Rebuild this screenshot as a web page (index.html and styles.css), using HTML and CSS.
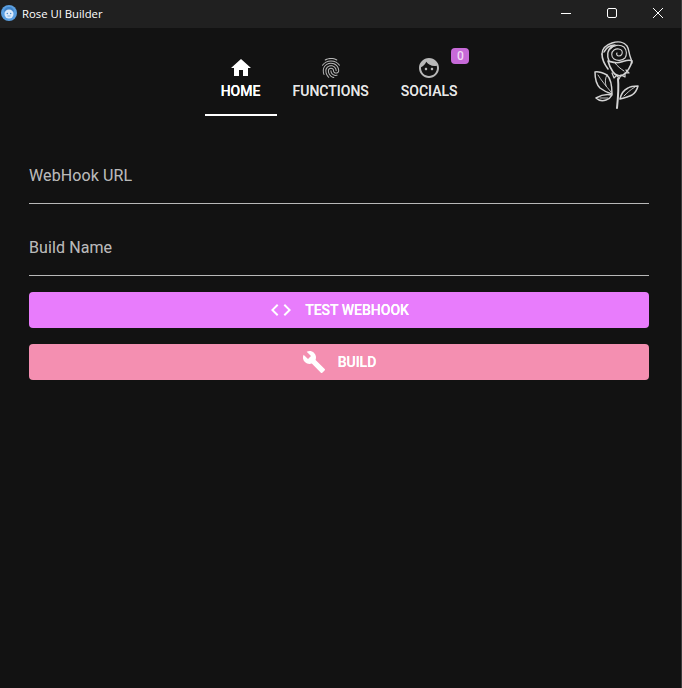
FILE: index.html
```html
<!DOCTYPE html>
<html lang="en">
<head>
<meta charset="utf-8">
<title>Rose UI Builder</title>
<link rel="stylesheet" href="styles.css">
</head>
<body>
<div class="window">
  <header class="titlebar">
    <svg class="app-icon" viewBox="0 0 16 16"><circle cx="8" cy="8" r="8" fill="#5b9fe0"/><path d="M3 7c0-3 2-5 5-5s5 2 5 5c-1-1-2-1.500-5-1.500S4 6 3 7z" fill="#3f83c8"/><circle cx="8" cy="9" r="4.500" fill="#dbeafa"/><circle cx="6.300" cy="8.500" r=".7" fill="#3f83c8"/><circle cx="9.700" cy="8.500" r=".7" fill="#3f83c8"/><path d="M6.500 11h3" stroke="#3f83c8" stroke-width=".6"/></svg>
    <span class="app-title">Rose UI Builder</span>
    <div class="win-controls">
      <svg class="win-btn" viewBox="0 0 46 28"><path d="M18 13.500h10" stroke="#fff" stroke-width="1"/></svg>
      <svg class="win-btn" viewBox="0 0 46 28"><rect x="18.500" y="8.500" width="9" height="9" rx="1.500" fill="none" stroke="#fff" stroke-width="1"/></svg>
      <svg class="win-btn" viewBox="0 0 46 28"><path d="M18 8l10 10M28 8L18 18" stroke="#fff" stroke-width="1"/></svg>
    </div>
  </header>
  <main class="app">
    <nav class="tabs">
      <a class="tab tab-active">
        <svg class="icon" viewBox="0 0 24 24"><path d="M10 20v-6h4v6h5v-8h3L12 3 2 12h3v8z"/></svg>
        <span>Home</span>
      </a>
      <a class="tab">
        <svg class="icon" viewBox="0 0 24 24"><path d="M17.81 4.470c-.08 0-.16-.02-.23-.06C15.660 3.420 14 3 12.010 3c-1.980 0-3.860.470-5.570 1.410-.24.130-.54.040-.68-.2-.13-.24-.04-.55.200-.68C7.820 2.520 9.860 2 12.010 2c2.130 0 3.990.470 6.030 1.520.25.130.34.430.210.670-.09.180-.26.280-.44.280zM3.500 9.720c-.1 0-.2-.03-.29-.09-.23-.16-.28-.47-.12-.7.990-1.400 2.250-2.500 3.750-3.270C9.980 4.040 14 4.030 17.150 5.650c1.500.770 2.760 1.860 3.750 3.250.160.220.110.540-.12.700-.23.160-.54.110-.7-.12-.9-1.260-2.040-2.250-3.390-2.940-2.870-1.470-6.540-1.470-9.400.010-1.360.700-2.500 1.700-3.400 2.960-.08.140-.23.210-.39.210zm6.250 12.070c-.13 0-.26-.05-.35-.15-.87-.87-1.340-1.430-2.010-2.640-.69-1.230-1.050-2.730-1.050-4.340 0-2.970 2.540-5.390 5.660-5.390s5.660 2.420 5.660 5.390c0 .280-.22.500-.5.500s-.5-.22-.5-.5c0-2.420-2.090-4.390-4.660-4.390-2.570 0-4.660 1.970-4.660 4.390 0 1.440.320 2.770.930 3.850.640 1.150 1.080 1.640 1.850 2.420.190.200.190.510 0 .710-.11.100-.24.150-.37.150zm7.170-1.850c-1.190 0-2.240-.3-3.100-.89-1.490-1.010-2.380-2.650-2.380-4.390 0-.28.220-.5.500-.5s.5.220.5.500c0 1.410.720 2.740 1.940 3.560.710.480 1.540.710 2.540.710.240 0 .640-.03 1.040-.1.270-.05.530.130.580.410.050.270-.13.530-.41.580-.57.110-1.070.120-1.210.120zM14.910 22c-.04 0-.09-.01-.13-.02-1.590-.44-2.630-1.030-3.720-2.100-1.400-1.390-2.170-3.240-2.170-5.220 0-1.620 1.380-2.940 3.080-2.940 1.700 0 3.080 1.320 3.080 2.940 0 1.070.930 1.940 2.080 1.940s2.080-.87 2.080-1.940c0-3.770-3.250-6.830-7.250-6.830-2.840 0-5.440 1.580-6.610 4.030-.39.810-.59 1.760-.59 2.800 0 .780.070 2.010.670 3.610.100.260-.03.550-.29.640-.26.100-.55-.04-.64-.29-.49-1.310-.73-2.610-.73-3.960 0-1.200.230-2.290.680-3.240 1.330-2.790 4.280-4.600 7.510-4.600 4.550 0 8.250 3.510 8.250 7.830 0 1.620-1.380 2.940-3.080 2.940s-3.080-1.320-3.080-2.940c0-1.070-.93-1.940-2.080-1.940s-2.080.87-2.080 1.940c0 1.710.660 3.310 1.870 4.510.950.940 1.860 1.460 3.270 1.850.270.070.420.350.350.610-.05.230-.26.380-.47.380z"/></svg>
        <span>Functions</span>
      </a>
      <a class="tab">
        <svg class="icon" viewBox="0 0 24 24"><path d="M9 11.750c-.69 0-1.250.560-1.250 1.250s.560 1.250 1.250 1.250 1.250-.56 1.250-1.250-.56-1.250-1.250-1.250zm6 0c-.69 0-1.250.560-1.250 1.250s.560 1.250 1.250 1.250 1.250-.56 1.250-1.250-.56-1.250-1.250-1.250zM12 2C6.480 2 2 6.480 2 12s4.480 10 10 10 10-4.480 10-10S17.520 2 12 2zm0 18c-4.410 0-8-3.590-8-8 0-.29.020-.58.050-.86 2.360-1.050 4.230-2.980 5.210-5.370C11.070 8.330 14.050 10 17.420 10c.780 0 1.530-.09 2.250-.26.210.710.330 1.470.330 2.260 0 4.410-3.590 8-8 8z"/></svg>
        <span>Socials</span>
        <b class="badge">0</b>
      </a>
    </nav>
    <svg class="rose" viewBox="0 0 65 80" fill="none" stroke="#d4d4d4" stroke-linecap="round" stroke-linejoin="round">
      <path stroke-width="1.400" d="M17 18c0-5 4-9 10-11 6-2 12-1 15 3 2 3 2 7 3 10 1 3 2 5 2 7"/>
      <path stroke-width="1.600" d="M17 18c0 6 3 11 6 15M19 16c2-4 6-7 11-7M24 25c-2-5-2-11 3-14"/>
      <path stroke-width="1.100" d="M25 13c3-4 10-5 14-2 3 3 3 8 1 11-3 3-8 3-11 1-3-2-3-7 0-9 3-2 7-1 8 1 1 3-1 5-3 5s-3-2-2-3"/>
      <path stroke-width="1.600" d="M23 25c4 1 8 3 13 1 4-1 8-3 11-1-1 5-5 12-9 14-4 2-8 0-10-3-2-3-4-7-5-11z"/>
      <path stroke-width="1" d="M30 27c2 3 6 6 9 8"/>
      <path stroke-width="1.200" d="M27 37l2 5 3-3 2 4 2-4 4 2 0-4 4 0-3-3"/>
      <path stroke-width="2" d="M33 43c1 9 0 19-1 29"/>
      <path stroke-width="1.500" d="M27 58c0-8-1-15-5-19-4-2-8-4-12-3 0 6 1 12 5 16 4 3 8 5 12 6z"/>
      <path stroke-width=".9" d="M13 39c3 5 8 11 13 17M22 39c-2 3-2 7-1 11"/>
      <path stroke-width="1.500" d="M27 59c-5-1-11 0-16 3 3 3 7 3 10 2 3-1 5-3 6-5z"/>
      <path stroke-width=".9" d="M15 62h8"/>
      <path stroke-width="1.500" d="M35 63c1-5 4-9 8-11 3-2 7-2 10-2-1 4-3 7-6 9-4 2-8 3-12 4z"/>
      <path stroke-width=".9" d="M39 60c3-3 6-6 11-9"/>
    </svg>
    <form class="form">
      <div class="field"><input class="input" type="text" placeholder="WebHook URL"></div>
      <div class="field"><input class="input" type="text" placeholder="Build Name"></div>
      <button class="btn btn-test" type="button">
        <svg class="btn-icon" viewBox="0 0 24 24"><path d="M9.400 16.600L4.800 12l4.600-4.600L8 6l-6 6 6 6 1.400-1.400zm5.200 0l4.600-4.600-4.600-4.600L16 6l6 6-6 6-1.400-1.400z"/></svg>
        <span>Test Webhook</span>
      </button>
      <button class="btn btn-build" type="button">
        <svg class="btn-icon" viewBox="0 0 24 24"><path d="M22.700 19l-9.100-9.100c.9-2.300.4-5-1.500-6.900-2-2-5-2.400-7.400-1.300L9 6 6 9 1.600 4.700C.4 7.100.9 10.100 2.900 12.100c1.900 1.900 4.600 2.400 6.900 1.500l9.100 9.100c.4.4 1 .4 1.400 0l2.300-2.300c.5-.4.5-1.100.1-1.400z"/></svg>
        <span>Build</span>
      </button>
    </form>
  </main>
</div>
</body>
</html>
```
FILE: styles.css
```css
* { box-sizing: border-box; }
html, body { margin: 0; height: 100%; background: #121212; }
.window {
  height: 688px;
  display: flex;
  flex-direction: column;
  border-right: 1px solid #3c3c3c;
  font-family: Roboto, sans-serif;
  overflow: hidden;
}
.titlebar {
  height: 28px;
  flex: none;
  display: flex;
  align-items: center;
  background: #202020;
  padding-left: 1px;
}
.app-icon { width: 16px; height: 16px; flex: none; margin-top: -2px; }
.app-title {
  margin-left: 5px;
  margin-top: -1px;
  font: 11.3px "Open Sans", sans-serif;
  color: #fff;
  white-space: nowrap;
}
.win-controls { margin-left: auto; display: flex; }
.win-btn { width: 46px; height: 28px; display: block; }
.app { position: relative; flex: 1; background: #121212; }
.tabs { display: flex; justify-content: center; height: 88px; padding-right: 3px; }
.tab {
  position: relative;
  height: 88px;
  padding: 28px 16px 0;
  min-width: 72px;
  display: flex;
  flex-direction: column;
  align-items: center;
  gap: 1px;
  font-size: 14px;
  font-weight: 500;
  line-height: 20px;
  text-shadow: 0 0 .4px currentColor;
  text-transform: uppercase;
  color: rgba(255, 255, 255, .7);
  white-space: nowrap;
  cursor: pointer;
}
.tab .icon { width: 24px; height: 24px; fill: currentColor; display: block; }
.tab-active { color: #fff; border-bottom: 2px solid #fff; }
.badge {
  position: absolute;
  top: 20px;
  right: 4px;
  min-width: 18px;
  height: 16px;
  padding: 0 4px;
  border-radius: 4px;
  background: #c76ad8;
  color: rgba(255, 255, 255, .75);
  font-size: 12px;
  font-weight: 500;
  line-height: 16px;
  text-align: center;
  text-shadow: none;
}
.rose { position: absolute; left: 585px; top: 8px; width: 65px; height: 80px; }
.form {
  padding: 32px 32px 0 29px;
  display: flex;
  flex-direction: column;
}
.field { margin-bottom: 16px; height: 56px; }
.input {
  width: 100%;
  height: 56px;
  padding: 0;
  border: 0;
  border-bottom: 1px solid #b8b8b8;
  background: transparent;
  color: #fff;
  font: 16px Roboto, sans-serif;
  letter-spacing: .1px;
  outline: none;
}
.input::placeholder {
  color: rgba(255, 255, 255, .6);
  opacity: 1;
  text-shadow: 0 0 .4px rgba(255, 255, 255, .3);
}
.btn {
  height: 36px;
  width: 100%;
  display: flex;
  align-items: center;
  justify-content: center;
  gap: 12px;
  margin-bottom: 16px;
  padding: 0;
  border: 0;
  border-radius: 4px;
  color: #fff;
  font: 500 14px/20px Roboto, sans-serif;
  text-shadow: 0 0 .3px #fff;
  text-transform: uppercase;
}
.btn-icon { width: 24px; height: 24px; fill: #fff; display: block; }
.btn-test { background: #e87cfc; }
.btn-build { background: #f48fb1; }
```
